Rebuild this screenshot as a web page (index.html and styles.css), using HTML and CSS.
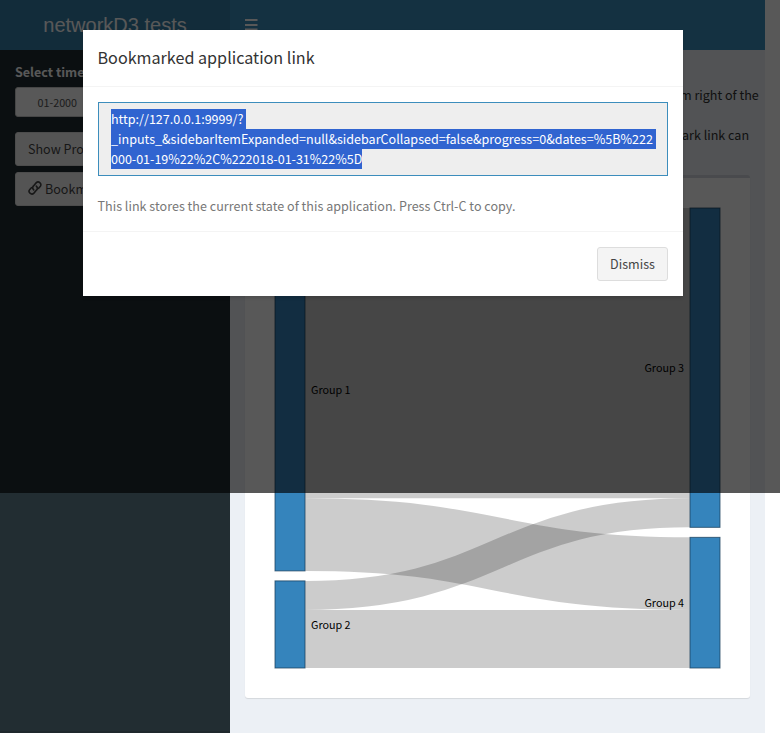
FILE: index.html
```html
<!DOCTYPE html>
<html lang="en">
<head>
<meta charset="utf-8">
<title>networkD3 tests</title>
<link rel="stylesheet" href="styles.css">
</head>
<body>
<div class="wrapper">
  <header class="main-header">
    <div class="logo">networkD3 tests</div>
    <nav class="navbar">
      <svg class="bars" width="13" height="12" viewBox="0 0 13 12"><path d="M0 1h12.5M0 6h12.5M0 10.5h12.5" stroke="#fff" stroke-width="1.8"/></svg>
    </nav>
  </header>
  <div class="columns">
    <aside class="sidebar">
      <label class="label">Select time</label>
      <div class="date-input">01-2000</div>
      <div class="btn side-btn">Show Pro</div>
      <div class="btn side-btn link-btn">
        <svg width="14" height="14" viewBox="0 0 14 14" fill="none" stroke="#444" stroke-width="1.6" stroke-linecap="round"><path d="M5.7 8.9C4.5 7.7 4.4 6.1 5.5 4.9L8.1 1.9C9.2.8 10.9.8 12 1.8C13.1 2.8 13.2 4.4 12.2 5.5L10.6 7.3"/><path d="M8.3 5.1C9.5 6.3 9.6 7.9 8.5 9.1L5.9 12.1C4.8 13.2 3.1 13.2 2 12.2C.9 11.2.8 9.6 1.8 8.5L3.4 6.7"/></svg>
        <span>Bookm</span>
      </div>
    </aside>
    <main class="content">
      <div class="intro">
        <p class="intro-first">m right of the</p>
        <p class="intro-second">ark link can</p>
      </div>
      <section class="box">
        <svg class="sankey" width="445" height="460" viewBox="0 0 445 460">
          <g class="links">
            <path d="M30 145.16H415" stroke-width="290.32"/>
            <path d="M30 326.6C222.5 326.6 222.5 365.64 415 365.64" stroke-width="72.58"/>
            <path d="M30 387.42C222.5 387.42 222.5 304.84 415 304.84" stroke-width="29.03"/>
            <path d="M30 430.97H415" stroke-width="58.06"/>
          </g>
          <g class="nodes">
            <rect x="0" y="0" width="30" height="362.9"/>
            <rect x="0" y="372.9" width="30" height="87.1"/>
            <rect x="415" y="0" width="30" height="319.35"/>
            <rect x="415" y="329.35" width="30" height="130.65"/>
          </g>
          <g class="names">
            <text x="36" y="186">Group 1</text>
            <text x="36" y="421">Group 2</text>
            <text x="409" y="164" text-anchor="end">Group 3</text>
            <text x="409" y="399" text-anchor="end">Group 4</text>
          </g>
        </svg>
      </section>
    </main>
  </div>
</div>
<div class="backdrop">
  <div class="modal">
    <div class="modal-header"><h4>Bookmarked application link</h4></div>
    <div class="modal-body">
      <div class="url-field">
        <div class="sel s1">http://127.0.0.1:9999/?</div>
        <div class="sel s2">_inputs_&amp;sidebarItemExpanded=null&amp;sidebarCollapsed=false&amp;progress=0&amp;dates=%5B%222</div>
        <div class="sel s3">000-01-19%22%2C%222018-01-31%22%5D</div>
      </div>
      <div class="hint">This link stores the current state of this application. Press Ctrl-C to copy.</div>
    </div>
    <div class="modal-footer"><div class="btn dismiss">Dismiss</div></div>
  </div>
</div>
</body>
</html>
```
FILE: styles.css
```css
* { box-sizing: border-box; }
body {
  margin: 0;
  height: 733px;
  overflow: hidden;
  background: #fff;
  color: #333;
  font-family: "Noto Sans CJK SC", sans-serif;
  font-size: 12.55px;
  line-height: 20px;
}
p, h4 { margin: 0; font-weight: 400; }
.wrapper { width: 765px; }
.main-header { display: flex; height: 50px; }
.logo {
  width: 230px;
  background: #367fa9;
  color: #fff;
  text-align: center;
  font: 20px/50px "Liberation Sans", sans-serif;
}
.navbar { flex: 1; background: #3c8dbc; padding: 19px 15px; }
.bars { display: block; }
.columns { display: flex; height: 683px; }
.sidebar {
  flex: none;
  width: 230px;
  padding: 12px 15px;
  background: #222d32;
  border-bottom: 2px solid #1e282c;
}
.label { display: block; color: #fff; font-weight: 700; margin-bottom: 5px; white-space: nowrap; }
.date-input {
  width: 85px;
  height: 30px;
  padding: 0 21.5px;
  border: 1px solid #ccc;
  border-radius: 3px;
  background: #fff;
  color: #555;
  font-size: 10.75px;
  line-height: 30px;
  margin-bottom: 15px;
  white-space: nowrap;
}
.btn {
  height: 34px;
  padding: 6px 12px;
  border: 1px solid #ddd;
  border-radius: 3px;
  background: #f4f4f4;
  color: #444;
  white-space: nowrap;
}
.side-btn { width: 90px; margin-bottom: 6px; }
.link-btn { display: flex; gap: 3px; }
.link-btn svg { margin-top: 2px; }
.dismiss { width: 71px; text-align: center; padding: 6px 0; }
.content { flex: 1; min-width: 0; padding: 35px 15px 0; background: #ecf0f5; }
.intro { height: 90px; padding-left: 435px; white-space: nowrap; }
.intro-first { margin-bottom: 20px; }
.intro-second { padding-left: 2px; }
.box {
  height: 523px;
  padding: 30px;
  border-top: 3px solid #d2d6de;
  border-radius: 3px;
  background: #fff;
  box-shadow: 0 1px 1px rgba(0, 0, 0, .1);
}
.sankey { display: block; overflow: visible; }
.links path { fill: none; stroke: #000; stroke-opacity: .2; }
.nodes rect { fill: #3182bb; stroke: #183f5c; fill-opacity: .98; stroke-opacity: .75; }
.names { font-size: 10.75px; fill: #000; }
.backdrop {
  position: absolute;
  top: 0;
  left: 0;
  width: 780px;
  height: 493px;
  padding: 30px 97px 0 83px;
  background: rgba(0, 0, 0, .655);
}
.modal { height: 266px; background: #fff; box-shadow: 0 2px 3px rgba(0, 0, 0, .125); }
.modal-header { height: 57px; padding: 17px 14.5px; border-bottom: 1px solid #f4f4f4; }
.modal-header h4 { font-size: 16.15px; line-height: 20px; }
.modal-body { height: 144px; padding: 15px; }
.url-field {
  height: 74px;
  padding: 6px 12px;
  border: 1px solid #3c8dbc;
  background: #eee;
}
.sel { width: fit-content; height: 20px; padding-right: 3px; background: #3064d0; color: #fff; white-space: nowrap; }
.s2 { letter-spacing: .006px; }
.s3 { padding-right: 0; letter-spacing: -.02px; }
.hint { margin: 20px 0 0 -.5px; color: #777; letter-spacing: .02px; }
.modal-footer {
  display: flex;
  justify-content: flex-end;
  height: 65px;
  padding: 15px;
  border-top: 1px solid #f4f4f4;
}
```
